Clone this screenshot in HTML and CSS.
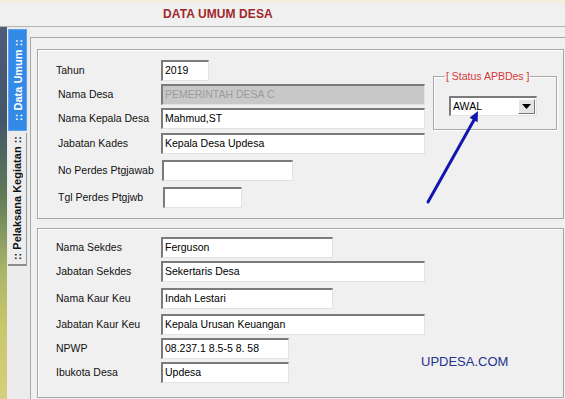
FILE: index.html
```html
<!DOCTYPE html>
<html lang="id">
<head>
    <meta charset="UTF-8">
    <title>Data Umum Desa</title>
    <link rel="stylesheet" href="styles.css">
</head>
<body>
    <div class="topline"></div>
    <header class="titlebar">
        <h1>DATA UMUM DESA</h1>
    </header>

    <div class="main">
        <div class="photo"></div>

        <nav class="tabs">
            <div class="tab active"><span>:: Data Umum ::</span></div>
            <div class="tab"><span>:: Pelaksana Kegiatan ::</span></div>
        </nav>

        <div class="page">
            <section class="panel panel-top">
                <div class="form form-top">
                    <label class="lbl">Tahun</label>
                    <input class="fld w-tahun" type="text" value="2019">

                    <label class="lbl ind">Nama Desa</label>
                    <input class="fld w-long disabled" type="text" value="PEMERINTAH DESA C" disabled>

                    <label class="lbl ind">Nama Kepala Desa</label>
                    <input class="fld w-long" type="text" value="Mahmud,ST">

                    <label class="lbl ind">Jabatan Kades</label>
                    <input class="fld w-long" type="text" value="Kepala Desa Updesa">

                    <label class="lbl ind">No Perdes Ptgjawab</label>
                    <input class="fld w-perdes" type="text" value="">

                    <label class="lbl ind">Tgl Perdes Ptgjwb</label>
                    <input class="fld w-tgl" type="text" value="">
                </div>

                <fieldset class="status">
                    <legend>[ Status APBDes ]</legend>
                    <div class="combo">
                        <span class="combo-text">AWAL</span>
                        <span class="combo-btn">
                            <svg width="9" height="5" viewBox="0 0 9 5"><path d="M0 0h9L4.5 5z" fill="#000"/></svg>
                        </span>
                    </div>
                </fieldset>
            </section>

            <section class="panel panel-bottom">
                <div class="form form-bottom">
                    <label class="lbl">Nama Sekdes</label>
                    <input class="fld w-mid" type="text" value="Ferguson">
                    <span></span>

                    <label class="lbl">Jabatan Sekdes</label>
                    <input class="fld w-long" type="text" value="Sekertaris Desa">
                    <span></span>

                    <label class="lbl">Nama Kaur Keu</label>
                    <input class="fld w-mid" type="text" value="Indah Lestari">
                    <span></span>

                    <label class="lbl">Jabatan Kaur Keu</label>
                    <input class="fld w-long" type="text" value="Kepala Urusan Keuangan">
                    <span></span>

                    <label class="lbl">NPWP</label>
                    <input class="fld w-short" type="text" value="08.237.1 8.5-5 8. 58">

                    <label class="lbl">Ibukota Desa</label>
                    <input class="fld w-short" type="text" value="Updesa">

                    <div class="brand">UPDESA.COM</div>
                </div>
            </section>
        </div>
    </div>

    <!-- panah penunjuk ke status APBDes -->
    <svg class="arrow" width="565" height="399" viewBox="0 0 565 399">
        <line x1="428" y1="202" x2="474" y2="120" stroke="#1414b0" stroke-width="3" stroke-linecap="round"/>
        <polygon points="478,111 477.6,122.3 469.6,117.8" fill="#1414b0"/>
    </svg>
</body>
</html>
```

FILE: styles.css
```css
body {
    margin: 0;
    background: #f0f0f0;
    font-family: "Liberation Sans", Arial, sans-serif;
    font-size: 10.5px;
    width: 565px;
    height: 399px;
    overflow: hidden;
    position: relative;
}

.topline {
    height: 2px;
    background: #f4efd6;
}

.titlebar {
    height: 24px;
    border-bottom: 1px solid #b4b4b4;
    background: #f0f0f0;
    display: flex;
    align-items: center;
}

.titlebar h1 {
    margin: 0 0 0 163px;
    font-size: 12px;
    font-weight: bold;
    color: #a0282c;
    letter-spacing: 0.1px;
}

.main {
    display: flex;
    height: 372px;
}

.photo {
    width: 7px;
    background: linear-gradient(to bottom, #4d5d7a 0%, #43566a 25%, #5f7a58 45%, #a9b468 65%, #c9c66a 80%, #d6cf7c 100%);
}

.tabs {
    width: 23px;
    padding-top: 2px;
    display: flex;
    flex-direction: column;
    gap: 2px;
    background: #ececec;
}

.tab {
    margin-left: 1px;
    width: 18px;
    display: flex;
    align-items: center;
    justify-content: center;
    font-weight: bold;
    font-size: 11px;
    color: #111;
    background: #ededed;
    border-right: 1px solid #9a9a9a;
    border-bottom: 2px solid #8c8c8c;
    height: 131px;
}

.tab span {
    writing-mode: vertical-rl;
    transform: rotate(180deg);
    white-space: nowrap;
}

.tab.active {
    background: #338ae6;
    color: #fff;
    border: 1px solid #5aa2ef;
    width: 17px;
    height: 100px;
    font-weight: bold;
}

.page {
    flex: 1;
    margin-top: 10px;
    border-top: 1px solid #a8a8a8;
    border-left: 1px solid #a8a8a8;
    padding: 11px 1px 0 6px;
    display: flex;
    flex-direction: column;
    gap: 9px;
}

.panel {
    border: 1px solid #a6a6a6;
    box-shadow: inset 1px 1px 0 #fff;
    display: flex;
    box-sizing: border-box;
    height: 170px;
}

.panel-top {
    padding: 10px 0 0 18px;
}

.panel-bottom {
    padding: 8px 0 0 18px;
}

.form {
    display: grid;
    grid-template-columns: 105px 264px;
}

.form-top {
    grid-template-rows: 24px 24px 25px 27px 27px 21px;
    align-items: start;
}

.form-bottom {
    grid-template-columns: 105px 264px 0;
    grid-template-rows: 24px 27px 26px 24px 24px 21px;
    align-items: start;
}

.lbl {
    color: #111;
    line-height: 21px;
    height: 21px;
}

.lbl.ind {
    padding-left: 2px;
}

.fld {
    box-sizing: border-box;
    height: 21px;
    margin: 0;
    padding: 0 0 2px 2px;
    font-family: "Liberation Sans", Arial, sans-serif;
    font-size: 10.5px;
    color: #000;
    background: #fff;
    border-top: 2px solid #7b7b7b;
    border-left: 2px solid #7b7b7b;
    border-right: 1px solid #e2e2e2;
    border-bottom: 1px solid #e2e2e2;
    outline: none;
}

.fld.disabled {
    background: #c8c8c8;
    color: #9c9c9c;
    -webkit-text-fill-color: #9c9c9c;
    opacity: 1;
}

.w-long { width: 264px; }
.w-mid { width: 172px; }
.w-short { width: 128px; }
.w-tahun { width: 48px; }
.w-perdes { width: 131px; margin-left: 1px; }
.w-tgl { width: 79px; margin-left: 2px; }

.status {
    margin: 10px 0 0 8px;
    padding: 13px 0 19px 6px;
    width: 124px;
    height: 60px;
    box-sizing: border-box;
    border: 1px solid #a8a8a8;
    box-shadow: inset 1px 1px 0 #fff, 1px 1px 0 #fff;
    align-self: flex-start;
}

.status legend {
    margin-left: 5px;
    padding: 0 1px;
    color: #d23a3a;
    font-size: 10.5px;
    line-height: 13px;
}

.combo {
    margin-left: 9px;
    width: 88px;
    height: 20px;
    box-sizing: border-box;
    display: flex;
    background: #fff;
    border-top: 2px solid #7b7b7b;
    border-left: 2px solid #7b7b7b;
    border-right: 1px solid #e2e2e2;
    border-bottom: 1px solid #e2e2e2;
}

.combo-text {
    flex: 1;
    padding-left: 2px;
    line-height: 17px;
    color: #000;
}

.combo-btn {
    width: 15px;
    margin: 1px;
    background: #e4e4e4;
    border: 1px solid #fff;
    border-right-color: #777;
    border-bottom-color: #777;
    display: flex;
    align-items: center;
    justify-content: center;
}

.brand {
    grid-column: 3;
    grid-row: 5 / 7;
    align-self: center;
    margin-left: -4px;
    margin-top: 2px;
    white-space: nowrap;
    font-size: 13px;
    color: #26328c;
}

.arrow {
    position: absolute;
    left: 0;
    top: 0;
    pointer-events: none;
}
```
